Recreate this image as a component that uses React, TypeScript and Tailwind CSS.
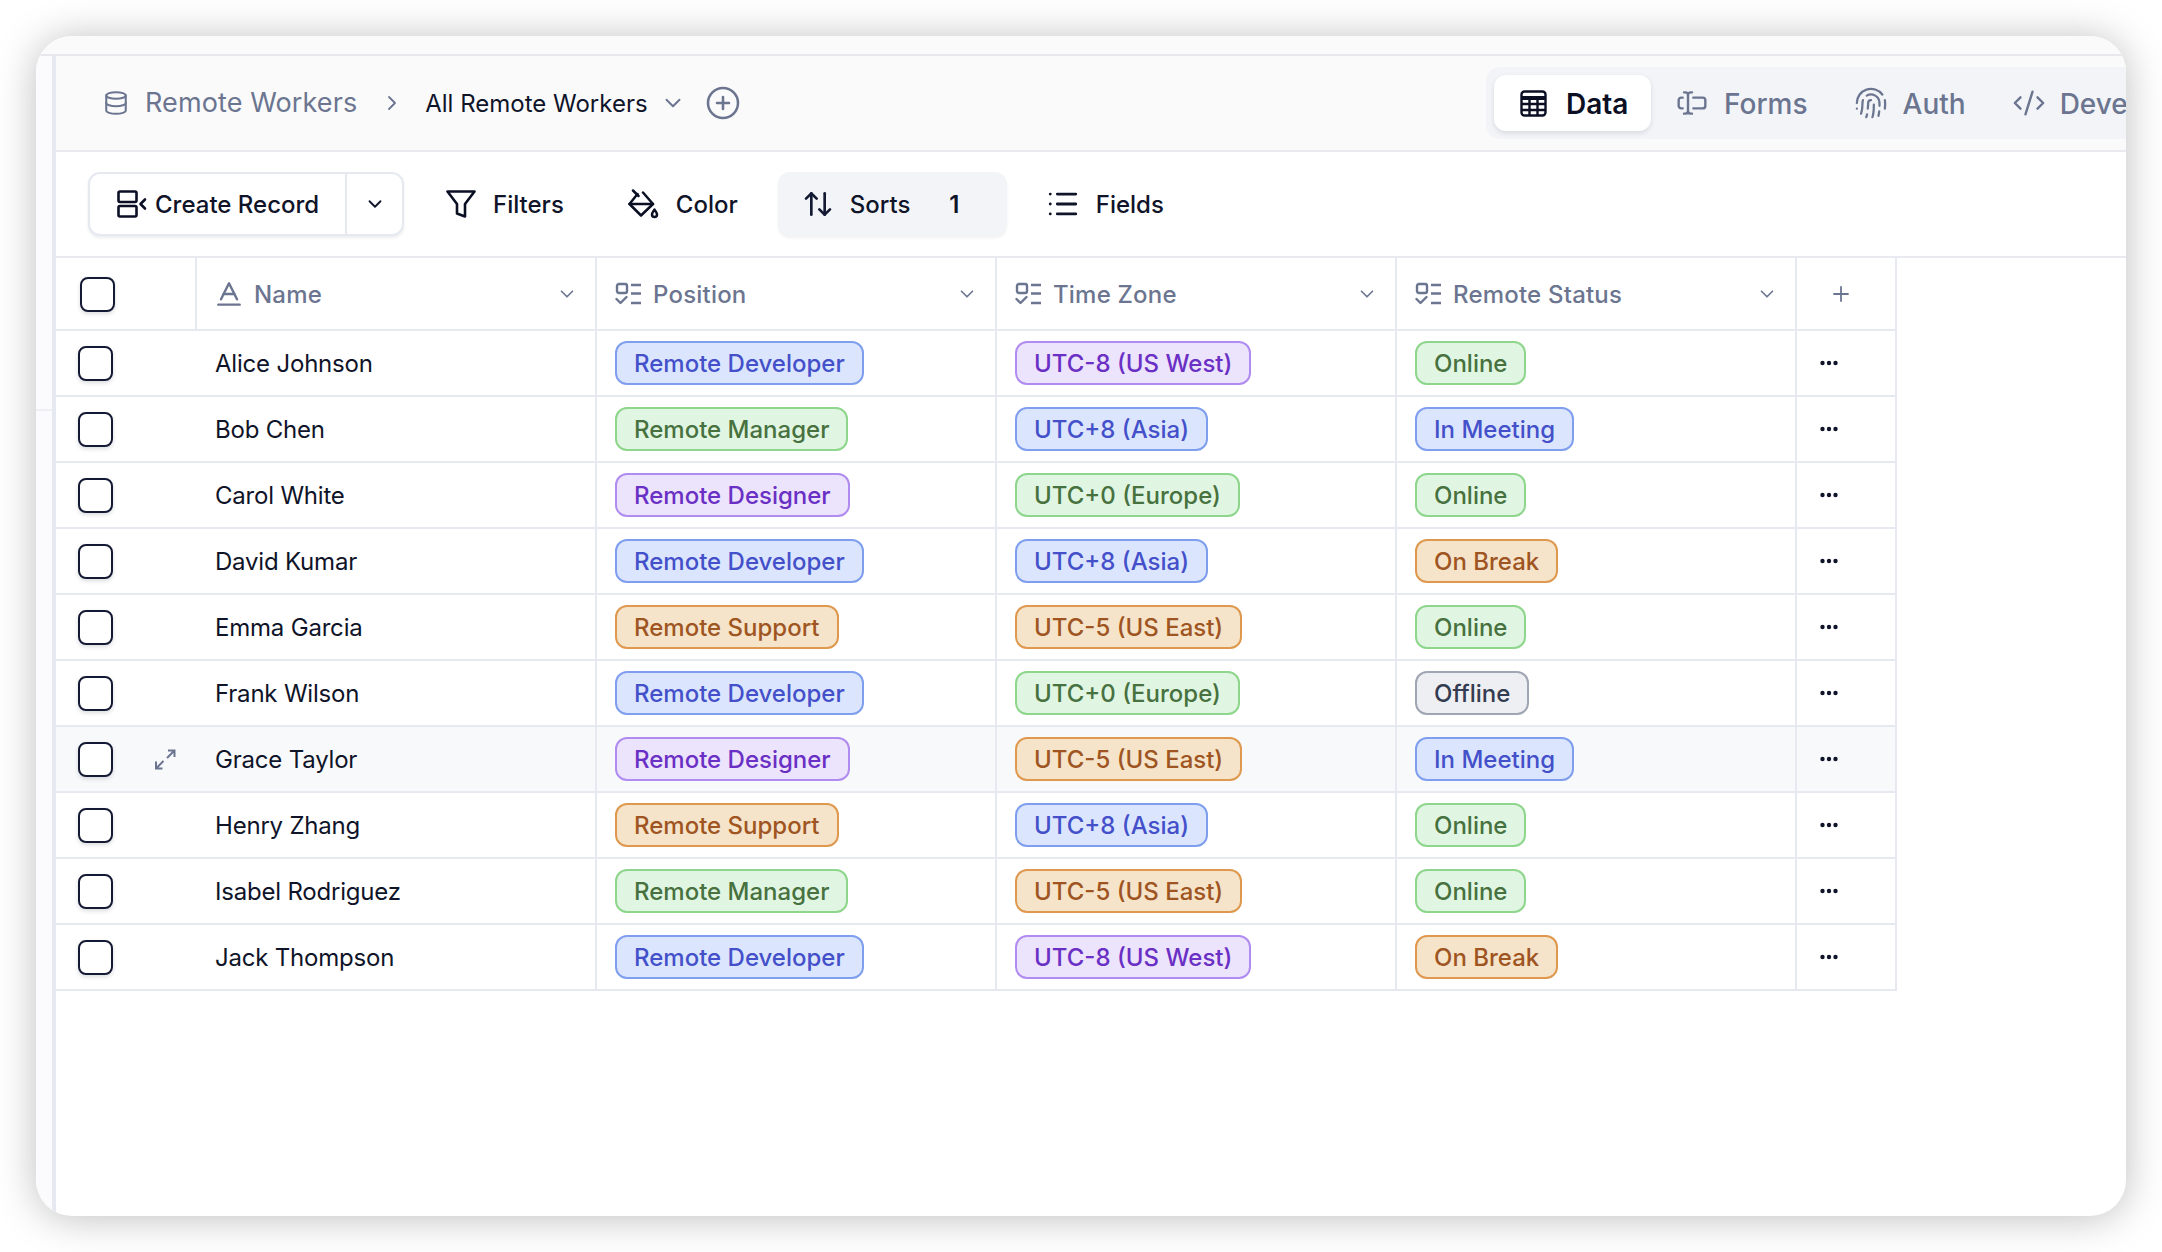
import React from "react";
import {
  Database,
  ChevronRight,
  ChevronDown,
  CirclePlus,
  TextCursorInput,
  Fingerprint,
  CodeXml,
  ArrowUpDown,
  List,
  Baseline,
  Plus,
} from "lucide-react";

type Tone = "blue" | "green" | "purple" | "orange" | "gray";

const toneClass: Record<Tone, string> = {
  blue: "bg-[#dbe6fe] border-[#7f9fee] text-[#4450c9]",
  green: "bg-[#e1f6e2] border-[#8dd68c] text-[#47713f]",
  purple: "bg-[#ece3fc] border-[#b18cf0] text-[#6a2fc4]",
  orange: "bg-[#f5e4ca] border-[#de994f] text-[#9f5522]",
  gray: "bg-[#eeeff3] border-[#a0a5b4] text-[#333c50]",
};

const rows: { name: string; pos: [string, Tone]; tz: [string, Tone]; st: [string, Tone] }[] = [
  { name: "Alice Johnson", pos: ["Remote Developer", "blue"], tz: ["UTC-8 (US West)", "purple"], st: ["Online", "green"] },
  { name: "Bob Chen", pos: ["Remote Manager", "green"], tz: ["UTC+8 (Asia)", "blue"], st: ["In Meeting", "blue"] },
  { name: "Carol White", pos: ["Remote Designer", "purple"], tz: ["UTC+0 (Europe)", "green"], st: ["Online", "green"] },
  { name: "David Kumar", pos: ["Remote Developer", "blue"], tz: ["UTC+8 (Asia)", "blue"], st: ["On Break", "orange"] },
  { name: "Emma Garcia", pos: ["Remote Support", "orange"], tz: ["UTC-5 (US East)", "orange"], st: ["Online", "green"] },
  { name: "Frank Wilson", pos: ["Remote Developer", "blue"], tz: ["UTC+0 (Europe)", "green"], st: ["Offline", "gray"] },
  { name: "Grace Taylor", pos: ["Remote Designer", "purple"], tz: ["UTC-5 (US East)", "orange"], st: ["In Meeting", "blue"] },
  { name: "Henry Zhang", pos: ["Remote Support", "orange"], tz: ["UTC+8 (Asia)", "blue"], st: ["Online", "green"] },
  { name: "Isabel Rodriguez", pos: ["Remote Manager", "green"], tz: ["UTC-5 (US East)", "orange"], st: ["Online", "green"] },
  { name: "Jack Thompson", pos: ["Remote Developer", "blue"], tz: ["UTC-8 (US West)", "purple"], st: ["On Break", "orange"] },
];

function Tag({ label, tone }: { label: string; tone: Tone }) {
  return (
    <span className={`inline-flex h-[44px] items-center rounded-[12px] border-2 px-[17px] pt-[2px] text-[24px] leading-none font-medium whitespace-nowrap ${toneClass[tone]}`}>
      {label}
    </span>
  );
}

function Checkbox() {
  return (
    <span className="block h-[35px] w-[35px] shrink-0 rounded-[8px] border-2 border-[#141a33] bg-white shadow-[0_2px_4px_rgba(15,23,41,0.15)]" />
  );
}

function SelectIcon() {
  return (
    <svg width="27" height="24" viewBox="0 0 27 24" fill="none" stroke="#6b7590" strokeWidth="2.4" className="shrink-0">
      <rect x="2" y="2" width="10" height="9" rx="2" />
      <path d="M1.5 17l4 4 6-6" strokeLinecap="round" strokeLinejoin="round" />
      <path d="M16 3h10M16 11.5h10M16 21h10" />
    </svg>
  );
}

function DataIcon() {
  return (
    <svg width="27" height="27" viewBox="0 0 27 27" fill="none" stroke="#0b0f24" strokeWidth="2.4" className="shrink-0">
      <rect x="1.5" y="1.5" width="24" height="24" rx="3" />
      <path d="M1.5 8h24" strokeWidth="4" />
      <path d="M1.5 14h24M1.5 20h24M9.5 8v18M17.5 8v18" />
    </svg>
  );
}

function CreateIcon() {
  return (
    <svg width="30" height="28" viewBox="0 0 30 28" fill="none" stroke="#0b0f24" strokeWidth="2.6" className="shrink-0">
      <rect x="1.5" y="1.5" width="18" height="10.5" rx="1.5" />
      <rect x="1.5" y="16" width="18" height="10.5" rx="1.5" />
      <path d="M28 9.5l-4.5 4.5 4.5 4.5" strokeLinecap="round" strokeLinejoin="round" />
    </svg>
  );
}

function ExpandIcon() {
  return (
    <svg width="22" height="21" viewBox="0 0 22 21" fill="none" stroke="#6b7590" strokeWidth="2" className="shrink-0">
      <path d="M14 1.5h6.5V8M20.5 1.5L13 9" />
      <path d="M2 12.5V19.5h6.5M2 19.5L9.5 12" />
    </svg>
  );
}

function FunnelIcon() {
  return (
    <svg width="30" height="28" viewBox="0 0 30 28" fill="none" stroke="#0b0f24" strokeWidth="2.6" strokeLinejoin="round" className="shrink-0">
      <path d="M1.5 1.5H28.5L19 14V26.5L11 23.5V14Z" />
    </svg>
  );
}

function BucketIcon() {
  return (
    <svg width="31" height="30" viewBox="0 0 31 30" fill="none" stroke="#0b0f24" strokeWidth="2.5" strokeLinejoin="round" strokeLinecap="round" className="shrink-0">
      <path d="M5 1.5L10.5 7" />
      <path d="M9.5 5L1.5 15L13 26.5L25 15L15 3.5" />
      <path d="M1.5 15H25" />
      <path d="M26.5 20.5C25.3 22.6 24 23.8 24 25.6A2.5 2.5 0 0 0 29 25.6C29 23.8 27.7 22.6 26.5 20.5Z" />
    </svg>
  );
}

function Dots() {
  return (
    <svg width="18" height="6" viewBox="0 0 18 6" fill="#0f1429" className="shrink-0">
      <circle cx="2.5" cy="3" r="2.2" />
      <circle cx="9" cy="3" r="2.2" />
      <circle cx="15.5" cy="3" r="2.2" />
    </svg>
  );
}

function HeaderCell({ icon, label }: { icon: React.ReactNode; label: string }) {
  return (
    <div className="flex w-[400px] shrink-0 items-center border-r-2 border-[#e6e9f0] pr-[17px] pl-[18px]">
      {icon}
      <span className="ml-[11px] pt-[2px] text-[24px] font-medium tracking-[0.2px] text-[#6b7590]">{label}</span>
      <ChevronDown size={22} strokeWidth={1.8} color="#6b7590" className="ml-auto" />
    </div>
  );
}

export default function App() {
  return (
    <div className="h-[1252px] w-[2162px] overflow-hidden bg-white pt-[36px] pl-[36px] [font-family:Inter,sans-serif]">
      <div className="flex h-[1180px] w-[2090px] flex-col overflow-hidden rounded-[36px] bg-white shadow-[0_2px_40px_rgba(0,0,0,0.26)]">
        <div className="h-[20px] shrink-0 border-b-2 border-[#e7e8ec] bg-[#fafafa]" />
        <div className="flex min-h-0 flex-1">
          <div className="w-[20px] shrink-0 border-r-4 border-[#e6e9f2] bg-[#fbfbfd]">
            <div className="h-[355px] border-b-2 border-[#eeeff3]" />
          </div>
          <div className="flex min-w-0 flex-1 flex-col">
            {/* Header */}
            <div className="flex h-[96px] shrink-0 items-center border-b-2 border-[#e8eaf0] bg-[#fafafb] pl-[47px]">
              <Database size={26} strokeWidth={1.9} color="#6b7590" className="shrink-0" />
              <span className="ml-[16px] pt-[1px] text-[27px] tracking-[0.1px] text-[#6b7590]">Remote Workers</span>
              <ChevronRight size={24} strokeWidth={1.8} color="#6b7590" className="ml-[23px]" />
              <span className="ml-[21px] pt-[2px] text-[24px] font-normal text-[#0f1429]">All Remote Workers</span>
              <ChevronDown size={26} strokeWidth={1.8} color="#6b7590" className="ml-[12px]" />
              <CirclePlus size={36} strokeWidth={1.7} color="#6b7590" className="ml-[19px]" />
              <div className="ml-auto flex h-[72px] w-[640px] shrink-0 items-center overflow-hidden rounded-l-[14px] bg-[#f3f4f8] pl-[8px] whitespace-nowrap">
                <div className="flex h-[56px] w-[157px] shrink-0 items-center rounded-[12px] bg-white pl-[26px] shadow-[0_2px_5px_rgba(15,23,41,0.12)]">
                  <DataIcon />
                  <span className="ml-[19px] pt-[1px] text-[28px] font-semibold text-[#0b0f24]">Data</span>
                </div>
                <TextCursorInput size={32} strokeWidth={1.8} color="#6b7590" className="ml-[25px] shrink-0" />
                <span className="ml-[16px] pt-[1px] text-[28px] font-medium text-[#6b7590]">Forms</span>
                <Fingerprint size={34} strokeWidth={1.6} color="#6b7590" className="ml-[46px] shrink-0" />
                <span className="ml-[15px] pt-[1px] text-[28px] font-medium text-[#6b7590]">Auth</span>
                <CodeXml size={34} strokeWidth={1.7} color="#6b7590" className="ml-[46px] shrink-0" />
                <span className="ml-[14px] pt-[1px] text-[28px] font-medium text-[#6b7590]">Developers</span>
              </div>
            </div>
            {/* Toolbar */}
            <div className="flex h-[106px] shrink-0 items-center border-b-2 border-[#e8eaf0] pl-[32px] text-[24px] font-medium text-[#0f1429]">
              <div className="flex h-[64px] w-[316px] shrink-0 items-center rounded-[12px] border-2 border-[#e6e9f0] bg-white shadow-[0_2px_3px_rgba(15,23,41,0.08)]">
                <div className="flex h-full w-[257px] items-center border-r-2 border-[#e6e9f0] pl-[27px]">
                  <CreateIcon />
                  <span className="ml-[8px] pt-[2px]">Create Record</span>
                </div>
                <ChevronDown size={22} strokeWidth={2} color="#0f1429" className="ml-[17px]" />
              </div>
              <div className="ml-[42px]"><FunnelIcon /></div>
              <span className="ml-[17px] pt-[2px]">Filters</span>
              <div className="ml-[64px]"><BucketIcon /></div>
              <span className="ml-[17px] pt-[2px]">Color</span>
              <div className="ml-[40px] flex h-[64px] w-[229px] shrink-0 items-center rounded-[12px] bg-[#f3f4f8] pl-[24px] shadow-[0_2px_3px_rgba(15,23,41,0.06)]">
                <ArrowUpDown size={32} strokeWidth={2} color="#141a33" className="shrink-0" />
                <span className="ml-[16px] pt-[2px]">Sorts</span>
                <span className="ml-[39px] pt-[2px] font-semibold">1</span>
              </div>
              <List size={34} strokeWidth={2} color="#0f1429" className="ml-[39px] shrink-0" />
              <span className="ml-[16px] pt-[2px]">Fields</span>
            </div>
            {/* Table */}
            <div className="w-[1841px]">
              <div className="flex h-[73px] items-stretch border-b-2 border-[#e6e9f0]">
                <div className="flex w-[141px] shrink-0 items-center border-r-2 border-[#e6e9f0] pt-[2px] pl-[24px]">
                  <Checkbox />
                </div>
                <HeaderCell label="Name" icon={<Baseline size={32} strokeWidth={1.8} color="#6b7590" className="-mr-[2px] -ml-[2px] shrink-0" />} />
                <HeaderCell label="Position" icon={<SelectIcon />} />
                <HeaderCell label="Time Zone" icon={<SelectIcon />} />
                <HeaderCell label="Remote Status" icon={<SelectIcon />} />
                <div className="flex w-[100px] shrink-0 items-center justify-center border-r-2 border-[#e6e9f0] pr-[10px]">
                  <Plus size={24} strokeWidth={1.8} color="#6b7590" />
                </div>
              </div>
              {rows.map((r) => (
                <div
                  key={r.name}
                  className={`flex h-[66px] items-stretch border-b-2 border-[#e6e9f0] ${r.name === "Grace Taylor" ? "bg-[#f8f9fb]" : ""}`}
                >
                  <div className="flex w-[541px] shrink-0 items-center border-r-2 border-[#e6e9f0] pl-[22px]">
                    <Checkbox />
                    <span className="flex w-[63px] shrink-0 justify-end">
                      {r.name === "Grace Taylor" ? <ExpandIcon /> : null}
                    </span>
                    <span className="ml-[39px] pt-[2px] text-[24px] tracking-[-0.2px] text-[#0f1429]">{r.name}</span>
                  </div>
                  {[r.pos, r.tz, r.st].map(([label, tone], i) => (
                    <div key={i} className="flex w-[400px] shrink-0 items-center border-r-2 border-[#e6e9f0] pl-[18px]">
                      <Tag label={label} tone={tone} />
                    </div>
                  ))}
                  <div className="flex w-[100px] shrink-0 items-center border-r-2 border-[#e6e9f0] pl-[23px]">
                    <Dots />
                  </div>
                </div>
              ))}
            </div>
          </div>
        </div>
      </div>
    </div>
  );
}
